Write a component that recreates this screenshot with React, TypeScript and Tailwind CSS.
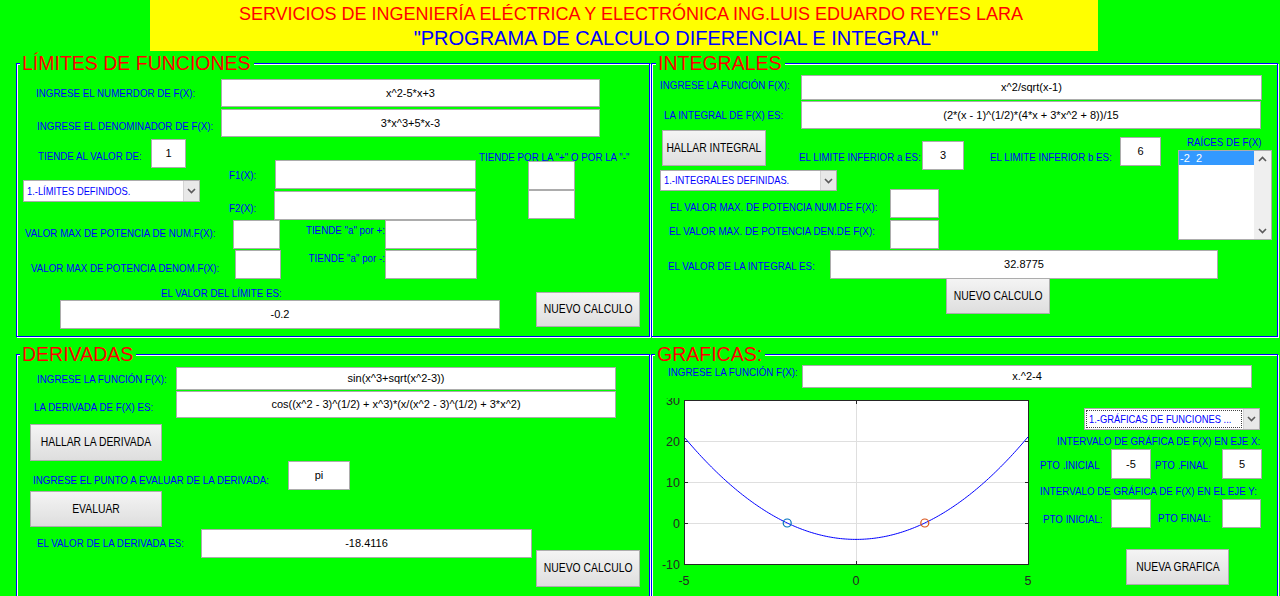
import React from "react"

const REG = "font-['Liberation_Sans',Arial,sans-serif]"

interface Props {
  children?: React.ReactNode;
  className?: string;
  right?: boolean;
}

// MATLAB pinta las etiquetas con una letra estrecha: se comprime la Liberation Sans
function Label({ children, className = "", right = false }: Props) {
  return (
    <div className={`${REG} text-[11.5px] leading-[14px] text-[#0000ff] whitespace-nowrap shrink-0 ${right ? "text-right" : ""} ${className}`}>
      <span className={`inline-block scale-x-[0.85] ${right ? "origin-right" : "origin-left"}`}>{children}</span>
    </div>
  )
}

function Box({ children, className = "" }: Props) {
  return (
    <div className={`${REG} text-[11px] text-black bg-white border border-[#acacac] flex items-center justify-center whitespace-nowrap overflow-hidden shrink-0 ${className}`}>
      {children}
    </div>
  )
}

function Btn({ children, className = "" }: Props) {
  return (
    <div className={`${REG} text-[12.2px] text-black border border-[#adadad] bg-linear-to-b from-[#f4f4f4] to-[#dedede] flex items-center justify-center whitespace-nowrap shrink-0 ${className}`}>
      <span className="inline-block scale-x-[0.85]">{children}</span>
    </div>
  )
}

function Chevron({ up = false }: { up?: boolean }) {
  return (
    <svg width="9" height="6" viewBox="0 0 9 6">
      <polyline
        points={up ? "1,5 4.5,1.5 8,5" : "1,1 4.5,4.5 8,1"}
        fill="none"
        stroke="#5a5a5a"
        strokeWidth="1.6"
      />
    </svg>
  )
}

function Select({ text, className = "", focus = false }: { text: string; className?: string; focus?: boolean }) {
  return (
    <div className={`flex bg-white border border-[#acacac] shrink-0 ${className}`}>
      <div className="flex-1 p-[1px] overflow-hidden">
        <div className={`h-full flex items-center pl-[2px] ${REG} text-[11px] text-[#0000ff] whitespace-nowrap ${focus ? "border border-dotted border-[#444]" : ""}`}>
          <span className="inline-block origin-left scale-x-[0.85]">{text}</span>
        </div>
      </div>
      <div className="w-[16px] bg-[#e8e8e8] border-l border-[#d4d4d4] flex items-center justify-center">
        <Chevron />
      </div>
    </div>
  )
}

function Panel({ title, className = "", legend = "", children }: { title: string; className?: string; legend?: string; children?: React.ReactNode }) {
  return (
    <div className={`border border-[#0000ff] shadow-[inset_1px_1px_0_#ffffff,1px_1px_0_#ffffff] shrink-0 ${className}`}>
      <div className={`-mt-[12px] h-[23px] w-fit bg-[#00ff00] pl-[2px] pr-[3px] ${REG} text-[19.5px] leading-[23px] text-[#ff0000] ${legend}`}>
        {title}
      </div>
      {children}
    </div>
  )
}

function Plot() {
  // ejes: x -5..5 -> 32..376, y -10..30 -> 166..2
  const sx = (x: number) => 32 + (x + 5) * 34.4
  const sy = (y: number) => 166 - (y + 10) * 4.1
  const pts: string[] = []
  for (let i = 0; i <= 200; i++) {
    const x = -5 + i * 0.05
    pts.push(`${sx(x).toFixed(2)},${sy(x * x - 4).toFixed(2)}`)
  }
  const yticks = [30, 20, 10, 0, -10]
  const xticks = [-5, 0, 5]
  return (
    <svg width="388" height="192" className="shrink-0 mt-[10px]" fontFamily="Liberation Sans, Arial, sans-serif">
      <rect x="32.5" y="2.5" width="344" height="164" fill="#ffffff" />
      {[20, 10, 0].map((v) => (
        <line key={v} x1="33" x2="376" y1={sy(v) + 0.5} y2={sy(v) + 0.5} stroke="#dfdfdf" />
      ))}
      <line x1={sx(0) + 0.5} x2={sx(0) + 0.5} y1="3" y2="166" stroke="#dfdfdf" />
      {yticks.map((v) => (
        <g key={v}>
          <line x1="33" x2="36" y1={sy(v) + 0.5} y2={sy(v) + 0.5} stroke="#262626" />
          <line x1="373" x2="376" y1={sy(v) + 0.5} y2={sy(v) + 0.5} stroke="#262626" />
          <text x="28" y={sy(v) + 4.5} textAnchor="end" fontSize="12.5" fill="#262626">{v}</text>
        </g>
      ))}
      {xticks.map((v) => (
        <g key={v}>
          <line x1={sx(v) + 0.5} x2={sx(v) + 0.5} y1="163" y2="166" stroke="#262626" />
          <line x1={sx(v) + 0.5} x2={sx(v) + 0.5} y1="3" y2="6" stroke="#262626" />
          <text x={sx(v)} y="186.5" textAnchor="middle" fontSize="12.5" fill="#262626">{v}</text>
        </g>
      ))}
      <polyline points={pts.join(" ")} fill="none" stroke="#0000ff" strokeWidth="1" />
      <rect x="32.5" y="2.5" width="344" height="164" fill="none" stroke="#262626" />
      <circle cx={sx(-2)} cy={sy(0)} r="4" fill="none" stroke="#0072bd" strokeWidth="1.2" />
      <circle cx={sx(2)} cy={sy(0)} r="4" fill="none" stroke="#d95319" strokeWidth="1.2" />
    </svg>
  )
}

export default function App() {
  return (
    <div className={`w-[1280px] h-[596px] overflow-hidden bg-[#00ff00] flex flex-col ${REG}`}>
      {/* encabezado */}
      <div className="ml-[150px] w-[948px] h-[51px] shrink-0 bg-[#ffff00] pt-[4px] text-center">
        <div className="pl-[14px] text-[18px] leading-[20px] text-[#ff0000] whitespace-nowrap">
          SERVICIOS DE INGENIERÍA ELÉCTRICA Y ELECTRÓNICA ING.LUIS EDUARDO REYES LARA
        </div>
        <div className="mt-[3px] pl-[104px] text-[20px] leading-[22px] text-[#0000ff] whitespace-nowrap">
          "PROGRAMA DE CALCULO DIFERENCIAL E INTEGRAL"
        </div>
      </div>

      <div className="flex mt-[12px] h-[274px] shrink-0">
        {/* LIMITES */}
        <Panel title="LÍMITES DE FUNCIONES" className="ml-[16px] w-[634px] h-[274px]" legend="ml-[3px]">
          <div className="flex items-center mt-[4px] h-[28px]">
            <Label className="w-[204px] pl-[19px]">INGRESE EL NUMERDOR DE F(X):</Label>
            <Box className="w-[379px] h-[28px]">x^2-5*x+3</Box>
          </div>
          <div className="flex items-center mt-[2px] h-[28px]">
            <Label className="w-[204px] pl-[20px] pt-[6px]">INGRESE EL DENOMINADOR DE F(X):</Label>
            <Box className="w-[379px] h-[28px]">3*x^3+5*x-3</Box>
          </div>

          <div className="flex items-start mt-[2px] h-[81px]">
            <div className="w-[212px] flex flex-col shrink-0">
              <div className="flex h-[29px]">
                <Label className="w-[134px] pl-[21px] pt-[10px]">TIENDE AL VALOR DE:</Label>
                <Box className="w-[35px] h-[29px]">1</Box>
              </div>
              <Select text="1.-LÍMITES DEFINIDOS." className="ml-[6px] mt-[12px] w-[177px] h-[22px]" />
            </div>
            <div className="w-[248px] flex flex-col mt-[21px] shrink-0">
              <div className="flex h-[29px]">
                <Label className="w-[46px] pt-[8px]">F1(X):</Label>
                <Box className="w-[201px] h-[29px]" />
              </div>
              <div className="flex h-[29px] mt-[2px]">
                <Label className="w-[45px] pt-[10px]">F2(X):</Label>
                <Box className="w-[202px] h-[29px]" />
              </div>
            </div>
            <div className="flex flex-col">
              <Label className="ml-[2px] mt-[11px]">TIENDE POR LA "+" O POR LA "-"</Label>
              <Box className="ml-[51px] -mt-[3px] w-[47px] h-[29px]" />
              <Box className="ml-[51px] w-[47px] h-[29px]" />
            </div>
          </div>

          <div className="flex items-start h-[29px]">
            <Label className="w-[216px] pl-[8px] pt-[6px]">VALOR MAX DE POTENCIA DE NUM.F(X):</Label>
            <Box className="w-[47px] h-[29px]" />
            <Label right className="w-[105px] pt-[3px]">TIENDE "a" por +:</Label>
            <Box className="w-[92px] h-[29px]" />
          </div>
          <div className="flex items-start mt-[1px] h-[29px]">
            <Label className="w-[218px] pl-[14px] pt-[11px]">VALOR MAX DE POTENCIA DENOM.F(X):</Label>
            <Box className="w-[46px] h-[29px]" />
            <Label right className="w-[104px] pt-[1px]">TIENDE "a" por -:</Label>
            <Box className="w-[92px] h-[29px]" />
          </div>

          <div className="flex items-start">
            <div className="w-[483px] flex flex-col shrink-0">
              <Label className="ml-[144px] mt-[7px]">EL VALOR DEL LÍMITE ES:</Label>
              <Box className="ml-[43px] w-[440px] h-[29px]">-0.2</Box>
            </div>
            <Btn className="ml-[36px] mt-[13px] w-[104px] h-[35px]">NUEVO CALCULO</Btn>
          </div>
        </Panel>

        {/* INTEGRALES */}
        <Panel title="INTEGRALES" className="ml-[1px] w-[627px] h-[274px]" legend="ml-[4px]">
          <div className="flex items-start h-[25px]">
            <Label className="w-[149px] pl-[8px] pt-[3px]">INGRESE LA FUNCIÓN F(X):</Label>
            <Box className="w-[461px] h-[25px]">x^2/sqrt(x-1)</Box>
          </div>
          <div className="flex items-start mt-[1px] h-[28px]">
            <Label className="w-[149px] pl-[12px] pt-[7px]">LA INTEGRAL DE F(X) ES:</Label>
            <Box className="w-[460px] h-[28px]">(2*(x - 1)^(1/2)*(4*x + 3*x^2 + 8))/15</Box>
          </div>

          <div className="flex items-start mt-[1px]">
            <div className="w-[526px] flex flex-col shrink-0">
              <div className="flex items-start h-[40px]">
                <Btn className="ml-[10px] w-[104px] h-[36px]">HALLAR INTEGRAL</Btn>
                <Label className="w-[156px] pl-[33px] mt-[20px]">EL LIMITE INFERIOR a ES:</Label>
                <Box className="w-[42px] h-[29px] mt-[11px]">3</Box>
                <Label className="w-[156px] pl-[26px] mt-[20px]">EL LIMITE INFERIOR b ES:</Label>
                <Box className="w-[41px] h-[29px] mt-[7px]">6</Box>
              </div>
              <Select text="1.-INTEGRALES DEFINIDAS." className="ml-[8px] w-[177px] h-[21px] -mb-[2px]" />
              <div className="flex items-start h-[29px]">
                <Label className="w-[238px] pl-[18px] pt-[11px]">EL VALOR MAX. DE POTENCIA NUM.DE F(X):</Label>
                <Box className="w-[49px] h-[29px]" />
              </div>
              <div className="flex items-start mt-[2px] h-[29px]">
                <Label className="w-[238px] pl-[17px] pt-[4px]">EL VALOR MAX. DE POTENCIA DEN.DE F(X):</Label>
                <Box className="w-[49px] h-[29px]" />
              </div>
            </div>
            <div className="flex flex-col">
              <Label className="ml-[9px] mt-[5px]">RAÍCES DE F(X)</Label>
              <div className="mt-[1px] w-[94px] h-[90px] bg-white border border-[#acacac] flex">
                <div className="flex-1">
                  <div className={`h-[14px] bg-[#3399ff] text-white ${REG} text-[11px] leading-[14px] pl-[1px] whitespace-pre`}>-2  2</div>
                </div>
                <div className="w-[17px] bg-[#efefef] flex flex-col justify-between items-center py-[5px]">
                  <Chevron up />
                  <Chevron />
                </div>
              </div>
            </div>
          </div>

          <div className="flex items-start mt-[1px] h-[29px]">
            <Label className="w-[178px] pl-[16px] pt-[9px]">EL VALOR DE LA INTEGRAL ES:</Label>
            <Box className="w-[388px] h-[29px]">32.8775</Box>
          </div>
          <Btn className="ml-[294px] -mt-[1px] w-[104px] h-[36px]">NUEVO CALCULO</Btn>
        </Panel>
      </div>

      <div className="flex mt-[17px] h-[260px] shrink-0">
        {/* DERIVADAS */}
        <Panel title="DERIVADAS" className="ml-[16px] w-[634px] h-[260px]" legend="ml-[3px]">
          <div className="flex items-center mt-[1px] h-[23px]">
            <Label className="w-[159px] pl-[20px]">INGRESE LA FUNCIÓN F(X):</Label>
            <Box className="w-[440px] h-[23px]">sin(x^3+sqrt(x^2-3))</Box>
          </div>
          <div className="flex items-center mt-[1px] h-[27px]">
            <Label className="w-[159px] pl-[17px] pt-[5px]">LA DERIVADA DE F(X) ES:</Label>
            <Box className="w-[440px] h-[27px]">cos((x^2 - 3)^(1/2) + x^3)*(x/(x^2 - 3)^(1/2) + 3*x^2)</Box>
          </div>
          <Btn className="ml-[13px] mt-[6px] w-[132px] h-[37px]">HALLAR LA DERIVADA</Btn>
          <div className="flex items-start h-[29px]">
            <Label className="w-[271px] pl-[16px] pt-[12px]">INGRESE EL PUNTO A EVALUAR DE LA DERIVADA:</Label>
            <Box className="w-[62px] h-[29px]">pi</Box>
          </div>
          <Btn className="ml-[13px] mt-[1px] w-[132px] h-[36px]">EVALUAR</Btn>
          <div className="flex items-start mt-[2px]">
            <Label className="w-[184px] pl-[20px] pt-[7px]">EL VALOR DE LA DERIVADA ES:</Label>
            <Box className="w-[331px] h-[29px]">-18.4116</Box>
            <Btn className="ml-[4px] mt-[21px] w-[104px] h-[37px]">NUEVO CALCULO</Btn>
          </div>
        </Panel>

        {/* GRAFICAS */}
        <Panel title="GRAFICAS:" className="ml-[1px] w-[627px] h-[260px]" legend="ml-[3px]">
          <div className="flex items-start -mt-[1px] h-[23px]">
            <Label className="w-[150px] pl-[16px]">INGRESE LA FUNCIÓN F(X):</Label>
            <Box className="w-[450px] h-[23px]">x.^2-4</Box>
          </div>
          <div className="flex items-start">
            <Plot />
            <div className="w-[237px] flex flex-col shrink-0">
              <Select text="1.-GRÁFICAS DE FUNCIONES ..." focus className="ml-[44px] mt-[20px] w-[176px] h-[22px]" />
              <Label className="ml-[17px] mt-[4px]">INTERVALO DE GRÁFICA DE F(X) EN EJE X:</Label>
              <div className="flex items-start mt-[1px] h-[30px]">
                <Label className="w-[71px] pt-[9px]">PTO .INICIAL</Label>
                <Box className="w-[40px] h-[30px]">-5</Box>
                <Label className="w-[71px] pl-[4px] pt-[9px]">PTO .FINAL</Label>
                <Box className="w-[40px] h-[30px]">5</Box>
              </div>
              <Label className="mt-[5px]">INTERVALO DE GRÁFICA DE F(X) EN EL EJE Y:</Label>
              <div className="flex items-start mt-[1px] h-[29px]">
                <Label className="w-[71px] pl-[3px] pt-[13px]">PTO INICIAL:</Label>
                <Box className="w-[40px] h-[29px]" />
                <Label className="w-[71px] pl-[7px] pt-[12px]">PTO FINAL:</Label>
                <Box className="w-[39px] h-[29px]" />
              </div>
              <Btn className="ml-[86px] mt-[21px] w-[103px] h-[36px]">NUEVA GRAFICA</Btn>
            </div>
          </div>
        </Panel>
      </div>
    </div>
  )
}
